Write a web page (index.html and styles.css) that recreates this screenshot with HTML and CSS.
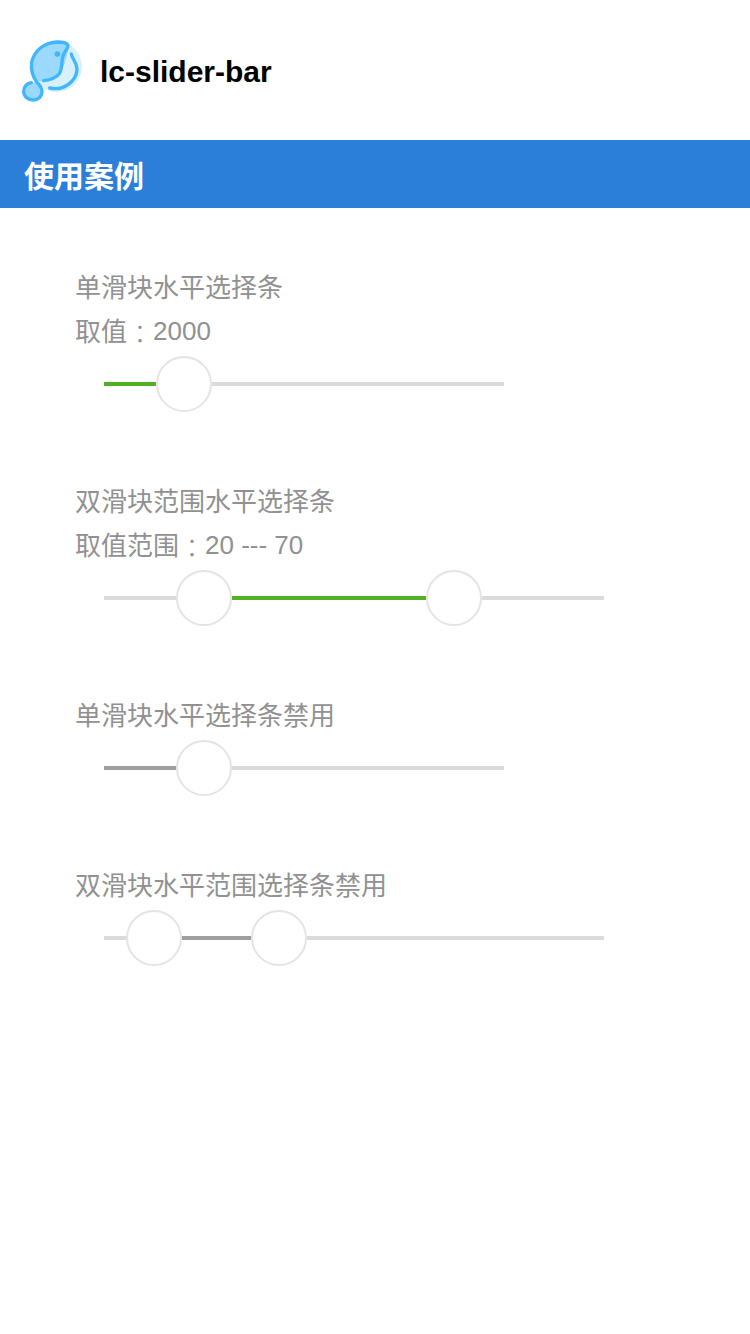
FILE: index.html
```html
<!DOCTYPE html>
<html lang="zh-CN">
<head>
<meta charset="utf-8">
<title>lc-slider-bar</title>
<link rel="stylesheet" href="styles.css">
</head>
<body>
<header class="header">
  <svg class="logo" viewBox="0 0 270 240" fill="none" stroke-linecap="round" stroke-linejoin="round">
    <circle cx="140" cy="110" r="76" fill="#d8f0fe"/>
    <path d="M76 154C62 136 60 110 67 88C80 48 121 28 166 38C180 42 174 56 172 70C168 90 163 110 149 129C138 145 122 151 100 153Z" fill="#9bd9fe"/>
    <circle cx="69" cy="184" r="27" fill="#9bd9fe"/>
    <path d="M101 152C122 149 138 144 148 131C160 113 151 88 163 69C169 58 175 54 174 46C171 38 158 36 142 36C104 37 73 61 65 96C62 121 68 140 80 156C90 166 96 173 96 184C96 200 84 210 69 210C53 210 41 199 41 184C41 170 51 159 64 158" stroke="#40b6ff" stroke-width="10"/>
    <path d="M184 72C185 86 200 94 201 118C200 151 163 184 119 174" stroke="#40b6ff" stroke-width="10"/>
    <circle cx="142" cy="72" r="8.5" fill="#40b6ff"/>
  </svg>
  <h1 class="title">lc-slider-bar</h1>
</header>
<h2 class="banner">使用案例</h2>
<main class="examples">
  <section class="example">
    <p class="label">单滑块水平选择条</p>
    <p class="label">取值<span class="colon" lang="zh-TW">：</span><span class="value">2000</span></p>
    <div class="slider">
      <span class="bar active" style="width:52px"></span><span class="thumb"></span><span class="bar" style="width:292px"></span>
    </div>
  </section>
  <section class="example">
    <p class="label">双滑块范围水平选择条</p>
    <p class="label">取值范围<span class="colon" lang="zh-TW">：</span><span class="value">20 --- 70</span></p>
    <div class="slider">
      <span class="bar" style="width:72px"></span><span class="thumb"></span><span class="bar active" style="width:194px"></span><span class="thumb"></span><span class="bar" style="width:122px"></span>
    </div>
  </section>
  <section class="example">
    <p class="label">单滑块水平选择条禁用</p>
    <div class="slider">
      <span class="bar disabled" style="width:72px"></span><span class="thumb"></span><span class="bar" style="width:272px"></span>
    </div>
  </section>
  <section class="example">
    <p class="label">双滑块水平范围选择条禁用</p>
    <div class="slider">
      <span class="bar" style="width:22px"></span><span class="thumb"></span><span class="bar disabled" style="width:69px"></span><span class="thumb"></span><span class="bar" style="width:297px"></span>
    </div>
  </section>
</main>
</body>
</html>
```
FILE: styles.css
```css
* { box-sizing: border-box; margin: 0; padding: 0; }
body {
  min-height: 1334px;
  background: #fff;
  font-family: "Liberation Sans", "Noto Sans CJK SC", sans-serif;
}
.header { display: flex; align-items: flex-start; height: 140px; padding: 30px 0 0 10px; }
.logo { width: 90px; height: 80px; }
.title { font-size: 30px; line-height: 40px; padding-top: 22px; color: #000; }
.banner {
  height: 68px;
  padding-left: 24px;
  background: #2b7fd9;
  color: #fff;
  font-size: 30px;
  line-height: 74px;
}
.examples { display: flex; flex-direction: column; gap: 64px; padding: 57px 0 0 75px; }
.label {
  height: 44px;
  padding-top: 1px;
  color: #919191;
  font-size: 26px;
  line-height: 44px;
  font-family: "Liberation Sans", "Noto Sans CJK SC", sans-serif;
  white-space: pre;
}
.colon { font-family: "Noto Sans CJK TC", sans-serif; font-weight: 300; line-height: 1; vertical-align: -3px; }
.value { line-height: 1; vertical-align: 1px; }
.slider { display: flex; align-items: center; height: 62px; padding-left: 29px; }
.bar { flex: none; height: 4px; background: #dbdbdb; }
.active { background: #52b024; }
.disabled { background: #9f9f9f; }
.thumb { flex: none; width: 56px; height: 56px; border: 2px solid #e4e4e4; border-radius: 50%; background: #fff; }
```
